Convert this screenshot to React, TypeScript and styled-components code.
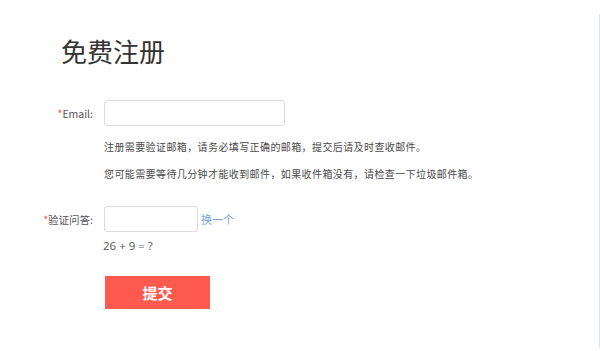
import React from "react";
import styled, { createGlobalStyle } from "styled-components";

const Global = createGlobalStyle`
  html, body { margin: 0; padding: 0; background: #fff; }
  body { font-family: "Noto Sans CJK SC", "Noto Sans", sans-serif; color: #555; }
  * { box-sizing: border-box; }
`;

const Page = styled.div`
  padding-top: 14px;
  width: 600px;
`;

const Panel = styled.div`
  height: 334px;
  border-right: 1px solid #e1e5e5;
`;

const Title = styled.h1`
  margin: 0;
  padding: 19px 0 0 61px;
  font-size: 26px;
  font-weight: 400;
  line-height: 36px;
  color: #333;
`;

const Form = styled.div`
  display: flex;
  flex-direction: column;
  margin-top: 31px;
`;

const Row = styled.div<{ $mt?: number }>`
  display: flex;
  align-items: center;
  margin-top: ${(p) => p.$mt ?? 0}px;
`;

const Label = styled.label`
  width: 94px;
  padding-right: 1px;
  text-align: right;
  font-size: 10.5px;
  color: #555;
  flex-shrink: 0;
`;

const Star = styled.span`
  color: #ff5a4f;
`;

const Input = styled.input<{ $w: number }>`
  width: ${(p) => p.$w}px;
  height: 26px;
  margin-left: 10px;
  border: 1.5px solid #dcdcdc;
  border-radius: 3px;
  outline: none;
  background: #fff;
`;

const Hint = styled.p<{ $mt: number }>`
  margin: ${(p) => p.$mt}px 0 0 104px;
  font-size: 10px;
  line-height: 14px;
  color: #4a4a4a;
  letter-spacing: 0.4px;
`;

const Link = styled.a`
  margin-left: 3px;
  font-size: 11px;
  color: #7aa3e0;
  text-decoration: none;
`;

const Question = styled.p`
  margin: 7px 0 0 103px;
  font-size: 11.5px;
  line-height: 14px;
  color: #555;
  font-family: "Open Sans", "Noto Sans", sans-serif;
`;

const Submit = styled.button`
  margin: 23px 0 0 105px;
  width: 105px;
  height: 33px;
  border: none;
  background: #ff5a4f;
  color: #fff;
  font-size: 15px;
  font-weight: 700;
  font-family: "Noto Sans CJK SC", sans-serif;
  cursor: pointer;
`;

export default function App() {
  return (
    <>
      <Global />
      <Page>
        <Panel>
          <Title>免费注册</Title>
          <Form>
            <Row>
              <Label>
                <Star>*</Star>Email:
              </Label>
              <Input $w={181} />
            </Row>
            <Hint $mt={14}>注册需要验证邮箱，请务必填写正确的邮箱，提交后请及时查收邮件。</Hint>
            <Hint $mt={13}>您可能需要等待几分钟才能收到邮件，如果收件箱没有，请检查一下垃圾邮件箱。</Hint>
            <Row $mt={25}>
              <Label>
                <Star>*</Star>验证问答:
              </Label>
              <Input $w={94} />
              <Link href="#">换一个</Link>
            </Row>
            <Question>26 + 9 = ?</Question>
            <Submit>提交</Submit>
          </Form>
        </Panel>
      </Page>
    </>
  );
}
